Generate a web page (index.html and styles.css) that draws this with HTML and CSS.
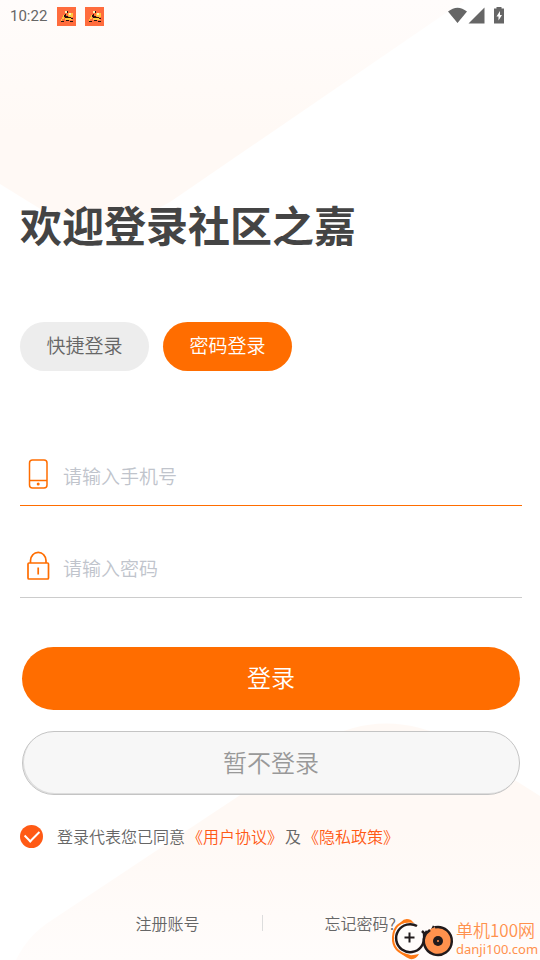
FILE: index.html
```html
<!DOCTYPE html>
<html lang="zh-CN">
<head>
<meta charset="utf-8">
<meta name="viewport" content="width=device-width, initial-scale=1">
<title>登录</title>
<link rel="stylesheet" href="styles.css">
</head>
<body>
<svg class="backdrop" viewBox="0 0 540 960" preserveAspectRatio="none" aria-hidden="true">
  <defs>
    <linearGradient id="top" x1="0" y1="0" x2="0" y2="1"><stop offset="0" stop-color="#fffcfb"/><stop offset=".6" stop-color="#fff9f5"/><stop offset="1" stop-color="#fff9f5"/></linearGradient>
    <linearGradient id="bottom" x1="0" y1="0" x2="0" y2="1"><stop offset="0" stop-color="#fff9f5"/><stop offset=".45" stop-color="#fff9f5"/><stop offset="1" stop-color="#fffcfb"/></linearGradient>
  </defs>
  <path fill="url(#top)" d="M0 0H465L170 202Q115 234 42 210L0 184Z"/>
  <path fill="url(#bottom)" d="M16 960Q28 935 52 920L320 742Q385 705 455 742L540 796V960Z"/>
</svg>
<div class="screen">
  <header class="status">
    <div class="status-group">
      <span class="clock">10:22</span>
      <svg class="app-icon" viewBox="0 0 19 19" role="img" aria-label="骑手通知"><use href="#scooter"/></svg>
      <svg class="app-icon" viewBox="0 0 19 19" role="img" aria-label="骑手通知"><use href="#scooter"/></svg>
    </div>
    <svg class="signals" viewBox="0 0 58 20" role="img" aria-label="无线网络、信号、充电中">
      <path fill="#666" d="M0 5.5Q9.5-2.2 19 5.5L9.5 17Z M20.500 17.500L36.500 1.500V17.500Z"/>
      <path fill="#666" fill-rule="evenodd" d="M46 2.500H48.500V1H53.500V2.500H56V17.500H46Z M52 5L48.500 10.500H50.500V14.500L54 9H52Z"/>
    </svg>
  </header>
  <main>
    <h1>欢迎登录社区之嘉</h1>
    <div class="tabs">
      <button class="tab" type="button">快捷登录</button>
      <button class="tab active" type="button">密码登录</button>
    </div>
    <form>
      <label class="field focused">
        <svg class="field-icon" viewBox="0 0 36 40" aria-hidden="true"><g fill="none" stroke="#ff6d00" stroke-width="1.500"><rect x="9.500" y="6" width="17.500" height="28" rx="3"/><path d="M9.500 26.500H27"/></g><circle cx="18.200" cy="30" r="1.500" fill="#ff6d00"/></svg>
        <input type="tel" aria-label="手机号" placeholder="请输入手机号">
      </label>
      <label class="field">
        <svg class="field-icon" viewBox="0 0 36 40" aria-hidden="true"><g fill="none" stroke="#ff6d00" stroke-width="1.700"><rect x="8" y="17" width="20.500" height="16" rx="1"/><path d="M10.500 17V14.500A7.700 8 0 0 1 26 14.500V17M18.200 21.500V28.500"/></g></svg>
        <input type="password" aria-label="密码" placeholder="请输入密码">
      </label>
      <button class="action primary" type="submit">登录</button>
      <button class="action secondary" type="button">暂不登录</button>
      <div class="agreement">
        <input id="agree" type="checkbox" checked>
        <label for="agree">登录代表您已同意</label><a href="#terms">《用户协议》</a><span>及</span><a href="#privacy">《隐私政策》</a>
      </div>
    </form>
    <nav class="links">
      <a href="#register">注册账号</a>
      <span class="divider"></span>
      <a href="#forgot">忘记密码?</a>
    </nav>
  </main>
</div>
<aside class="watermark">
  <svg viewBox="0 0 64 42" aria-hidden="true">
    <path fill="none" stroke="#ff7a16" stroke-width="2" d="M20 3Q4 4 3 19Q2 34 20 38"/>
    <path fill="#ff7a16" d="M11 4Q15-1 21 2L24 5Q14 3 8 8ZM10 34Q18 39 29 36Q26 42 20 41Q13 38 10 34Z"/>
    <circle cx="20" cy="20" r="14" fill="#fffcfb"/>
    <path fill="none" stroke="#211a1c" stroke-width="2.500" d="M27 8A14 14 0 1 0 31 29Q35 24 34 15L32 13M35 16L37 13M42 12L44 8"/>
    <circle cx="48" cy="23" r="14" fill="#ff914d"/>
    <path fill="none" stroke="#211a1c" stroke-width="2.500" d="M45 9.300A14 14 0 1 1 36 15.500L40 12"/>
    <circle cx="48" cy="23" r="5" fill="#211a1c"/><circle cx="48" cy="23" r="1" fill="#ff914d"/>
    <path stroke="#211a1c" stroke-width="2" d="M14.500 19.500H24.500M19.500 14.500V24.500"/>
  </svg>
  <div class="watermark-text"><span class="site">单机100网</span><span class="domain">danji100.com</span></div>
</aside>
<svg width="0" height="0" class="symbols" aria-hidden="true">
  <symbol id="scooter" viewBox="0 0 19 19">
    <path fill="#ff6c3d" d="M0 0H19V19H0Z"/>
    <path fill="#ffc83f" d="M11 6H16V10H12V9H11ZM6 8H8V10H7V12H5V14H4V12H5V10H6ZM8 11H13V13H8ZM13 11H15V13H13Z"/>
    <path fill="#fff0b0" d="M8 4H10V6H8ZM12 6H14V8H12Z"/>
    <path fill="#25150e" d="M10 4H11V6H10ZM8 7H9V9H11V10H14V11H8V10H7V8H8ZM4 14H7V15H4ZM9 13H12V14H9ZM14 11H16V12H14ZM13 14H16V15H13Z"/>
  </symbol>
</svg>
</body>
</html>
```
FILE: styles.css
```css
* { box-sizing: border-box; }
body {
  margin: 0;
  background: #fff;
  color: #666;
  font-family: "Noto Sans CJK SC", sans-serif;
  font-weight: 350;
}
button, input { font: inherit; }
a { color: inherit; text-decoration: none; }
.backdrop {
  position: absolute;
  inset: 0;
  z-index: -1;
  width: 100%;
  height: 100%;
}
.symbols { position: absolute; }
.screen { min-height: 100vh; }
.status {
  display: flex;
  justify-content: space-between;
  align-items: center;
  height: 32px;
  padding: 0 34px 0 10px;
}
.status-group { display: flex; align-items: center; gap: 9px; }
.clock { width: 38px; font: 400 15px/20px Roboto, sans-serif; color: #666; }
.app-icon { width: 19px; height: 19px; }
.signals { width: 58px; height: 20px; }
main { padding: 161px 20px 0; }
h1 {
  margin: 0;
  color: #444;
  font-size: 42px;
  line-height: 62px;
  font-weight: 700;
}
.tabs { display: flex; gap: 14px; margin-top: 67px; }
.tab {
  width: 129px;
  height: 49px;
  padding: 0 0 4px;
  border: 0;
  border-radius: 25px;
  background: #ededed;
  color: #666;
  font-size: 19px;
}
.tab.active { background: #ff6d00; color: #fff; }
form { padding-top: 65px; }
.field {
  display: flex;
  align-items: center;
  height: 70px;
  margin-right: -2px;
  padding-top: 7px;
  border-bottom: 1px solid #ccc;
}
.field + .field { margin-top: 22px; }
.field.focused { border-color: #ff6d00; }
.field-icon { flex: none; width: 36px; height: 40px; }
.field input {
  flex: 1;
  min-width: 0;
  height: 40px;
  padding: 2px 0 0 7px;
  border: 0;
  outline: 0;
  background: transparent;
  font-size: 19px;
}
.field input::placeholder { color: #c0c4cc; opacity: 1; }
.action {
  display: block;
  width: calc(100% - 2px);
  height: 63px;
  margin: 49px 0 0 2px;
  padding: 0 0 4px;
  border: 0;
  border-radius: 32px;
  font-size: 24px;
}
.primary { background: #ff6d00; color: #fff; }
.secondary {
  height: 64px;
  margin-top: 21px;
  border: 1px solid #c4c4c4;
  background: #f7f7f7;
  box-shadow: inset 1px -1px #ddd;
  color: #999;
}
.agreement {
  display: flex;
  align-items: center;
  gap: 2px;
  height: 24px;
  margin-top: 29px;
  font-size: 16px;
}
.agreement input {
  display: grid;
  place-items: center;
  appearance: none;
  width: 23px;
  height: 23px;
  margin: 0 12px 0 0;
  border-radius: 50%;
  background: #ff5a15;
}
.agreement input:checked::before {
  content: "";
  width: 12px;
  height: 7px;
  margin-bottom: 3px;
  border: solid #fff;
  border-width: 0 0 2px 2px;
  transform: rotate(-45deg);
}
.agreement a { color: #ff5a15; }
.links {
  display: grid;
  grid-template-columns: 1fr 1px 1fr;
  align-items: center;
  margin-top: 63px;
  padding-right: 16px;
  font-size: 16px;
  line-height: 24px;
}
.links a { justify-self: end; margin-right: 62px; }
.links .divider + a { justify-self: start; margin: 0 0 0 62px; }
.divider { height: 16px; background: #ddd; }
.watermark {
  position: absolute;
  right: 0;
  bottom: 0;
  display: flex;
  align-items: center;
  width: 150px;
  height: 42px;
  color: #ff914d;
}
.watermark svg { flex: none; width: 64px; height: 42px; }
.watermark-text { display: flex; flex-direction: column; margin-left: 2px; }
.site { font-size: 17px; line-height: 20px; white-space: nowrap; }
.domain { font: 13px/18px "Noto Sans", sans-serif; }
```
